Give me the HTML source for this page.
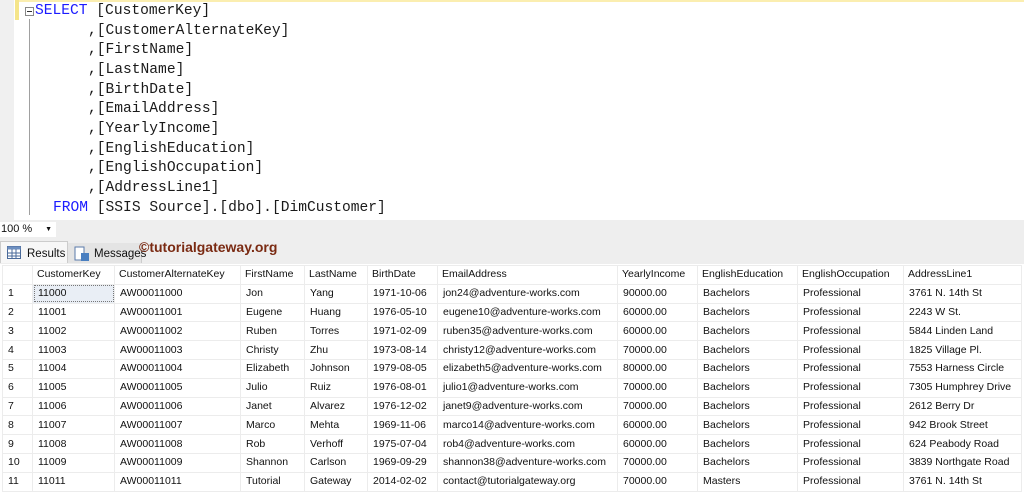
<!DOCTYPE html>
<html><head><meta charset="utf-8"><style>
*{margin:0;padding:0;box-sizing:border-box}
body{width:1024px;height:490px;overflow:hidden;background:#fff;font-family:"Liberation Sans",Arial,sans-serif;position:relative}
#code{position:absolute;left:0;top:0;width:1024px;height:220px;background:#fff}
#gut{position:absolute;left:0;top:0;width:14px;height:220px;background:#f0f0f0}
#ybar{position:absolute;left:15px;top:0;width:4px;height:20px;background:#f5e58a}
#topline{position:absolute;left:19px;top:0;right:0;height:2px;background:#fbeeb0}
#vline{position:absolute;left:29px;top:19px;width:1px;height:196px;background:#a0a0a0}
.box{position:absolute;left:25px;top:7px;width:9px;height:9px;border:1px solid #888;background:#fff}
.box:after{content:"";position:absolute;left:1px;top:3px;width:5px;height:1px;background:#333}
.ln{position:absolute;font-family:"Liberation Mono",monospace;font-size:14.6px;color:#1a1a1a;white-space:pre;line-height:20px}
.k{color:#1c1cff}
#zoom{position:absolute;left:0;top:220px;width:1024px;height:44px;background:#eeeeee}
#zbox{position:absolute;left:0;top:222px;width:56px;height:15px;background:#fff;font-size:11px;padding-left:1px;line-height:15px;color:#111}
#zbox span{position:absolute;right:4px;top:0;font-size:7px}
.tab{position:absolute;top:241px;height:22px;font-size:11.5px;line-height:24px;color:#111}
#t1{left:0;width:68px;background:#f7f7f7;border:1px solid #ccc;border-bottom:none;padding-left:26px}
#t2{left:68px;width:74px;background:#e4e4e4;border-right:1px solid #ccc;padding-left:26px;top:243px;height:20px;line-height:22px}
#wm{position:absolute;left:139px;top:239px;font-size:14px;font-weight:bold;color:#7a2a12;font-family:"Liberation Sans",sans-serif}
table{position:absolute;left:2px;top:265px;border-collapse:collapse;font-size:10.5px;color:#111;border-left:1px solid #888;border-top:1px solid #aaa;table-layout:fixed}
td{height:18.8px;border:1px solid #ececec;padding:0 0 0 5px;white-space:nowrap;overflow:hidden;line-height:17px}
tr.h td{padding-left:4px}
.sel{outline:1px dotted #777;outline-offset:-2px;background:#e9eef5}
</style></head><body>
<div id="code"></div><div id="gut"></div><div id="ybar"></div><div id="topline"></div><div id="vline"></div><div class="box"></div>
<div class="ln" style="left:35px;top:1px"><span class="k">SELECT</span> [CustomerKey]</div>
<div class="ln" style="left:88px;top:21px">,[CustomerAlternateKey]</div>
<div class="ln" style="left:88px;top:40px">,[FirstName]</div>
<div class="ln" style="left:88px;top:60px">,[LastName]</div>
<div class="ln" style="left:88px;top:80px">,[BirthDate]</div>
<div class="ln" style="left:88px;top:99px">,[EmailAddress]</div>
<div class="ln" style="left:88px;top:119px">,[YearlyIncome]</div>
<div class="ln" style="left:88px;top:139px">,[EnglishEducation]</div>
<div class="ln" style="left:88px;top:158px">,[EnglishOccupation]</div>
<div class="ln" style="left:88px;top:178px">,[AddressLine1]</div>
<div class="ln" style="left:53px;top:198px"><span class="k">FROM</span> [SSIS Source].[dbo].[DimCustomer]</div>
<div id="zoom"></div>
<div id="zbox">100 %<span>▼</span></div>
<div class="tab" id="t1"><svg style="position:absolute;left:6px;top:4px" width="14" height="13"><rect x="0.5" y="0.5" width="13" height="12" fill="#fff" stroke="#4a6a9a"/><rect x="0.5" y="0.5" width="13" height="3" fill="#6d8fc0"/><path d="M0 7h14M0 10h14M5 3v10M9 3v10" stroke="#4a6a9a"/></svg>Results</div>
<div class="tab" id="t2"><svg style="position:absolute;left:6px;top:3px" width="16" height="16"><rect x="1" y="1" width="9" height="13" fill="#fff" stroke="#5a7aaa"/><rect x="7" y="7" width="8" height="8" fill="#4a7fc0"/></svg>Messages</div>
<div id="wm">©tutorialgateway.org</div>
<table>
<colgroup><col style="width:30px"><col style="width:82px"><col style="width:126px"><col style="width:64px"><col style="width:63px"><col style="width:70px"><col style="width:180px"><col style="width:80px"><col style="width:100px"><col style="width:106px"><col style="width:118px"></colgroup>
<tr class="h"><td></td><td>CustomerKey</td><td>CustomerAlternateKey</td><td>FirstName</td><td>LastName</td><td>BirthDate</td><td>EmailAddress</td><td>YearlyIncome</td><td>EnglishEducation</td><td>EnglishOccupation</td><td>AddressLine1</td></tr>
<tr><td>1</td><td class="sel">11000</td><td>AW00011000</td><td>Jon</td><td>Yang</td><td>1971-10-06</td><td>jon24@adventure-works.com</td><td>90000.00</td><td>Bachelors</td><td>Professional</td><td>3761 N. 14th St</td></tr>
<tr><td>2</td><td>11001</td><td>AW00011001</td><td>Eugene</td><td>Huang</td><td>1976-05-10</td><td>eugene10@adventure-works.com</td><td>60000.00</td><td>Bachelors</td><td>Professional</td><td>2243 W St.</td></tr>
<tr><td>3</td><td>11002</td><td>AW00011002</td><td>Ruben</td><td>Torres</td><td>1971-02-09</td><td>ruben35@adventure-works.com</td><td>60000.00</td><td>Bachelors</td><td>Professional</td><td>5844 Linden Land</td></tr>
<tr><td>4</td><td>11003</td><td>AW00011003</td><td>Christy</td><td>Zhu</td><td>1973-08-14</td><td>christy12@adventure-works.com</td><td>70000.00</td><td>Bachelors</td><td>Professional</td><td>1825 Village Pl.</td></tr>
<tr><td>5</td><td>11004</td><td>AW00011004</td><td>Elizabeth</td><td>Johnson</td><td>1979-08-05</td><td>elizabeth5@adventure-works.com</td><td>80000.00</td><td>Bachelors</td><td>Professional</td><td>7553 Harness Circle</td></tr>
<tr><td>6</td><td>11005</td><td>AW00011005</td><td>Julio</td><td>Ruiz</td><td>1976-08-01</td><td>julio1@adventure-works.com</td><td>70000.00</td><td>Bachelors</td><td>Professional</td><td>7305 Humphrey Drive</td></tr>
<tr><td>7</td><td>11006</td><td>AW00011006</td><td>Janet</td><td>Alvarez</td><td>1976-12-02</td><td>janet9@adventure-works.com</td><td>70000.00</td><td>Bachelors</td><td>Professional</td><td>2612 Berry Dr</td></tr>
<tr><td>8</td><td>11007</td><td>AW00011007</td><td>Marco</td><td>Mehta</td><td>1969-11-06</td><td>marco14@adventure-works.com</td><td>60000.00</td><td>Bachelors</td><td>Professional</td><td>942 Brook Street</td></tr>
<tr><td>9</td><td>11008</td><td>AW00011008</td><td>Rob</td><td>Verhoff</td><td>1975-07-04</td><td>rob4@adventure-works.com</td><td>60000.00</td><td>Bachelors</td><td>Professional</td><td>624 Peabody Road</td></tr>
<tr><td>10</td><td>11009</td><td>AW00011009</td><td>Shannon</td><td>Carlson</td><td>1969-09-29</td><td>shannon38@adventure-works.com</td><td>70000.00</td><td>Bachelors</td><td>Professional</td><td>3839 Northgate Road</td></tr>
<tr><td>11</td><td>11011</td><td>AW00011011</td><td>Tutorial</td><td>Gateway</td><td>2014-02-02</td><td>contact@tutorialgateway.org</td><td>70000.00</td><td>Masters</td><td>Professional</td><td>3761 N. 14th St</td></tr>
</table>
</body></html>
